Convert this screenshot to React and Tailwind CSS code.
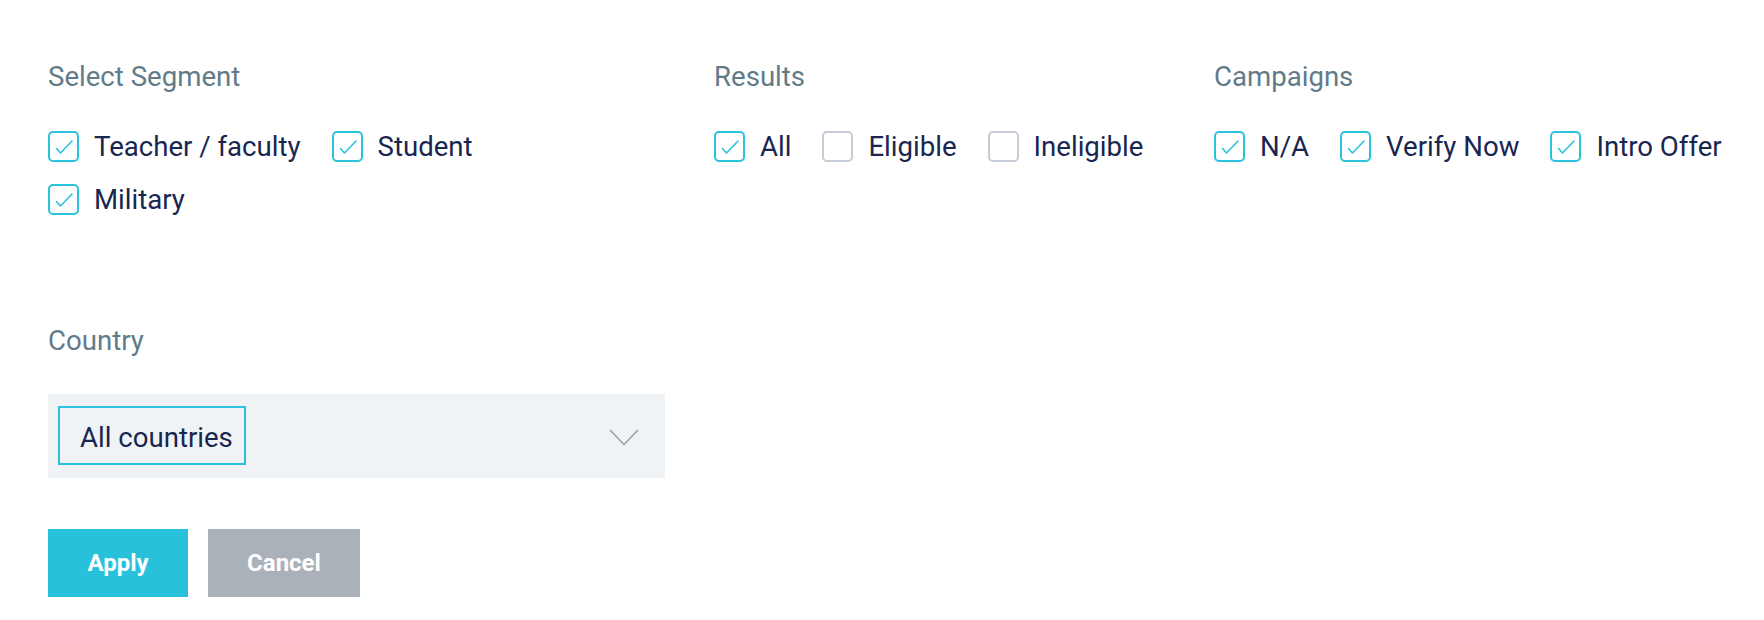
import React from 'react'

const font = { fontFamily: 'Roboto, "Liberation Sans", sans-serif' }

function Check({ checked }) {
  return (
    <span
      className={`flex h-[31px] w-[31px] shrink-0 items-center justify-center rounded-[5px] border-2 ${
        checked ? 'border-[#2ac2dd]' : 'border-[#c6cbd8]'
      }`}
    >
      {checked && (
        <svg width="31" height="31" viewBox="0 0 31 31" fill="none" className="-m-[2px]">
          <path d="M8.5 17.5 L12.5 22 L24 10" stroke="#2ac2dd" strokeWidth="1.6" strokeLinecap="round" strokeLinejoin="round" />
        </svg>
      )}
    </span>
  )
}

function Option({ label, checked }) {
  return (
    <label className="mr-[31px] flex h-[31px] items-center gap-[15px] whitespace-nowrap text-[27.6px] leading-[32px] text-[#19264f]">
      <Check checked={checked} />
      <span>{label}</span>
    </label>
  )
}

function Heading({ children }) {
  return <div className="text-[27.6px] leading-[32px] text-[#627b89]">{children}</div>
}

export default function App() {
  return (
    <div className="min-h-[620px] bg-white pl-[48px] pt-[61px]" style={font}>
      <div className="flex">
        <div className="w-[666px] pr-[49px]">
          <Heading>Select Segment</Heading>
          <div className="mt-[38px] flex flex-wrap gap-y-[22px]">
            <Option label="Teacher / faculty" checked />
            <Option label="Student" checked />
            <Option label="Military" checked />
          </div>
        </div>
        <div className="w-[500px]">
          <Heading>Results</Heading>
          <div className="mt-[38px] flex">
            <Option label="All" checked />
            <Option label="Eligible" />
            <Option label="Ineligible" />
          </div>
        </div>
        <div className="flex-1">
          <Heading>Campaigns</Heading>
          <div className="mt-[38px] flex">
            <Option label="N/A" checked />
            <Option label="Verify Now" checked />
            <Option label="Intro Offer" checked />
          </div>
        </div>
      </div>

      <div className="mt-[110px] w-[617px]">
        <Heading>Country</Heading>
        <div className="mt-[37px] flex h-[84px] items-start justify-between bg-[#f0f3f6] pl-[10px] pr-[26px]">
          <div className="mt-[12px] flex h-[59px] w-[188px] items-center border-2 border-[#2ac2dd] pl-[20px] pt-[4px] text-[27.6px] text-[#19264f]">
            All countries
          </div>
          <svg width="30" height="17" viewBox="0 0 30 17" fill="none" className="mt-[35px]">
            <path d="M1 1 L15 15.5 L29 1" stroke="#9a9a9a" strokeWidth="1.5" />
          </svg>
        </div>
        <div className="mt-[51px] flex gap-[20px]">
          <button className="h-[68px] w-[140px] bg-[#28c1dc] text-[24px] font-bold text-white">Apply</button>
          <button className="h-[68px] w-[152px] bg-[#abb1b8] text-[24px] font-bold text-white">Cancel</button>
        </div>
      </div>
    </div>
  )
}
